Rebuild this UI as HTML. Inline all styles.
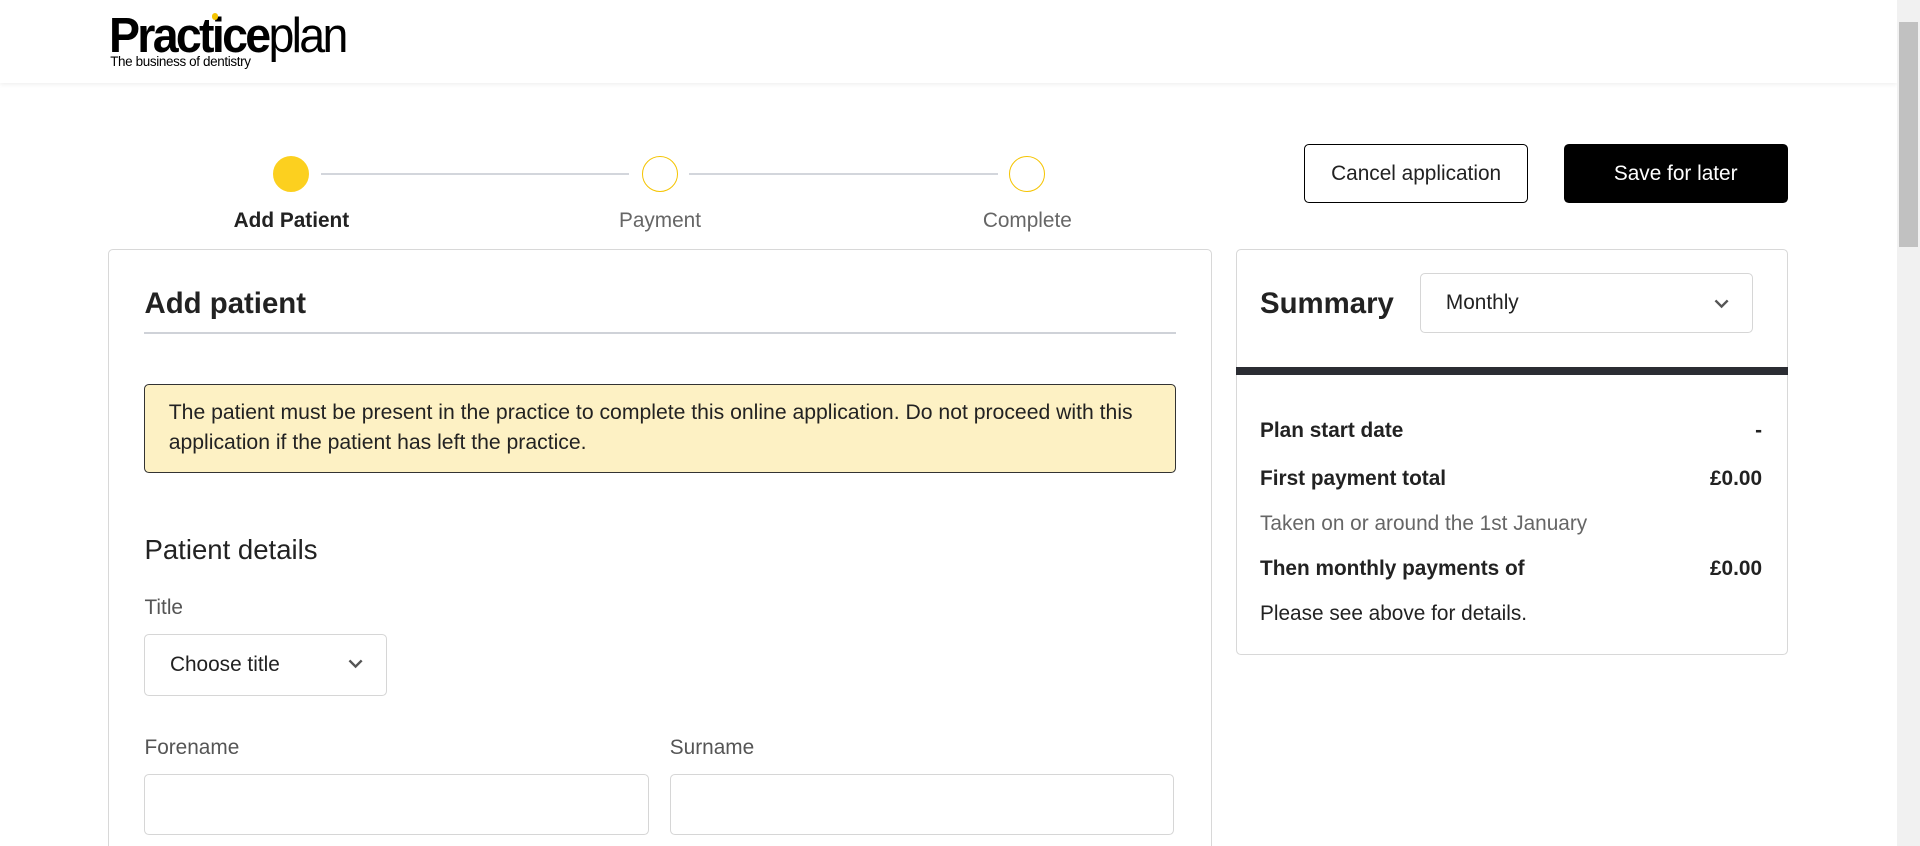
<!DOCTYPE html>
<html><head><meta charset="utf-8"><style>
html,body{margin:0;padding:0;overflow:hidden}
body{width:1568px;height:691px;zoom:1.22449;font-family:"Liberation Sans",sans-serif;color:#222;background:#fff;position:relative}
.a{position:absolute}
.hdr{left:0;top:0;width:1549px;height:68px;background:#fff;box-shadow:0 1px 4px rgba(0,0,0,.08)}
.sb{left:1549px;top:0;width:19px;height:691px;background:#f1f1f1}
.th{left:1551px;top:18px;width:15px;height:184px;background:#c1c1c1}
.circ{width:28px;height:28px;border-radius:50%;border:1px solid #f5c400;background:#fff}
.line{height:2px;background:#d3d6dc}
.lbl{font-size:17px;width:200px;text-align:center;color:#666}
.btn{box-sizing:border-box;height:48px;border-radius:4px;font-size:17px;display:flex;align-items:center;justify-content:center}
.card{box-sizing:border-box;border:1px solid #d8d8d8;border-radius:4px;background:#fff}
.sel{box-sizing:border-box;border:1px solid #d6d6d6;border-radius:4px;background:#fff;font-size:17px;display:flex;align-items:center;padding-left:20px}
.chev{position:absolute;right:18px;top:50%;margin-top:-6px}
.row{left:1029px;width:410px;font-size:17px;display:flex;justify-content:space-between}
.gl{font-size:17px;color:#555}
</style></head><body>
<div class="a hdr"></div>
<div class="a" style="left:89px;top:9px;font-size:38px;letter-spacing:-2.2px;line-height:40px;color:#000;transform:scaleY(1.05)"><b>Practice</b><span style="font-weight:normal">plan</span></div>
<div class="a" style="left:173px;top:11px;width:5px;height:5px;border-radius:50%;background:#f5c400"></div>
<div class="a" style="left:90px;top:44px;font-size:11px;letter-spacing:-.3px;color:#000">The business of dentistry</div>
<div class="a sb"></div><div class="a th"></div>

<div class="a line" style="left:262px;top:141px;width:252px"></div>
<div class="a line" style="left:563px;top:141px;width:252px"></div>
<div class="a circ" style="left:223px;top:127px;background:#fcd01f;border-color:#fcd01f"></div>
<div class="a circ" style="left:524px;top:127px"></div>
<div class="a circ" style="left:824px;top:127px"></div>
<div class="a lbl" style="left:138px;top:171px;color:#222;font-weight:bold">Add Patient</div>
<div class="a lbl" style="left:439px;top:171px">Payment</div>
<div class="a lbl" style="left:739px;top:171px">Complete</div>

<div class="a btn" style="left:1065px;top:118px;width:183px;border:1px solid #000">Cancel application</div>
<div class="a btn" style="left:1277px;top:118px;width:183px;background:#000;color:#fff">Save for later</div>

<div class="a card" style="left:88px;top:203px;width:902px;height:520px"></div>
<div class="a" style="left:118px;top:234px;font-size:24px;font-weight:bold">Add patient</div>
<div class="a" style="left:118px;top:271px;width:842px;height:2px;background:#cfd2d8"></div>
<div class="a" style="left:118px;top:314px;width:842px;height:72px;box-sizing:border-box;background:#fdf1c4;border:1px solid #333;border-radius:4px;padding:10px 19px;font-size:17.3px;line-height:25px">The patient must be present in the practice to complete this online application. Do not proceed with this application if the patient has left the practice.</div>
<div class="a" style="left:118px;top:436px;font-size:22.5px">Patient details</div>
<div class="a gl" style="left:118px;top:487px">Title</div>
<div class="a sel" style="left:118px;top:518px;width:198px;height:50px">Choose title<svg class="chev" width="14" height="10" viewBox="0 0 14 10"><path d="M2 2l5 5 5-5" stroke="#555" stroke-width="2" fill="none"/></svg></div>
<div class="a gl" style="left:118px;top:601px">Forename</div>
<div class="a gl" style="left:547px;top:601px">Surname</div>
<div class="a sel" style="left:118px;top:632px;width:412px;height:50px"></div>
<div class="a sel" style="left:547px;top:632px;width:412px;height:50px"></div>

<div class="a card" style="left:1009px;top:203px;width:451px;height:332px"></div>
<div class="a" style="left:1029px;top:234px;font-size:24px;font-weight:bold">Summary</div>
<div class="a sel" style="left:1160px;top:223px;width:272px;height:49px">Monthly<svg class="chev" width="14" height="10" viewBox="0 0 14 10" style="margin-top:-4px"><path d="M2 2l5 5 5-5" stroke="#555" stroke-width="2" fill="none"/></svg></div>
<div class="a" style="left:1009px;top:300px;width:451px;height:6px;background:#2b2d33"></div>
<div class="a row" style="top:342px;font-weight:bold"><span>Plan start date</span><span>-</span></div>
<div class="a row" style="top:381px;font-weight:bold"><span>First payment total</span><span>£0.00</span></div>
<div class="a row" style="top:418px;color:#666"><span>Taken on or around the 1st January</span></div>
<div class="a row" style="top:455px;font-weight:bold"><span>Then monthly payments of</span><span>£0.00</span></div>
<div class="a row" style="top:492px"><span>Please see above for details.</span></div>
</body></html>
